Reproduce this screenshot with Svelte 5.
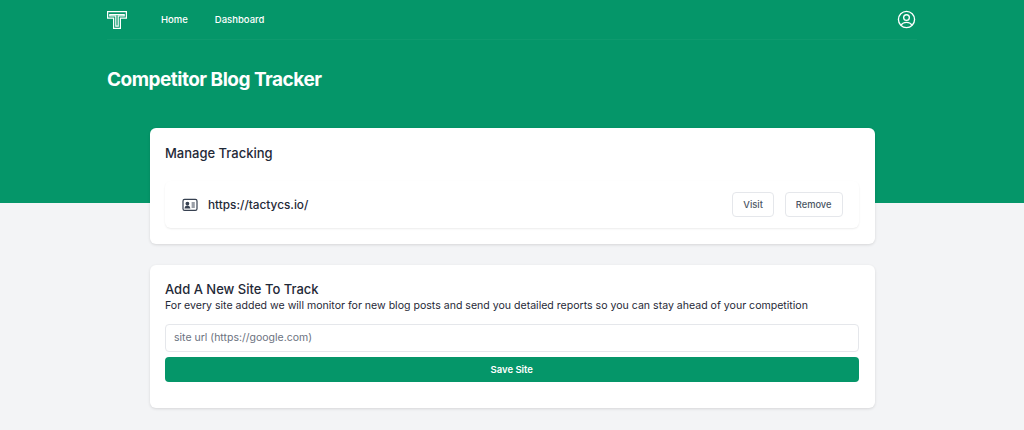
<script>
  let siteUrl = $state('');
  const links = ['Home', 'Dashboard'];
  const sites = ['https://tactycs.io/'];
</script>

<div class="page">
  <header class="hero">
    <nav class="nav">
      <div class="nav-left">
        <svg class="logo" width="20" height="18" viewBox="0 0 20 18" fill="none" stroke="#fff" stroke-width="1.2">
          <path d="M0.6 0.6H19.4V7.2H13.4V17.4H6.6V7.2H0.6Z" />
          <path d="M2.8 3.6H17.2V5H11.2V15.2H8.8V5H2.8Z" />
        </svg>
        {#each links as link}
          <a class="nav-link" href="#top">{link}</a>
        {/each}
      </div>
      <svg width="19" height="19" viewBox="0 0 24 24" fill="none" stroke="#fff" stroke-width="1.7">
        <circle cx="12" cy="12" r="10.2" />
        <circle cx="12" cy="9.6" r="3.6" />
        <path d="M5.2 18.9C6.8 16.6 9.2 15.6 12 15.6s5.2 1 6.8 3.3" />
      </svg>
    </nav>
    <h1>Competitor Blog Tracker</h1>
  </header>

  <main class="content">
    <section class="card manage">
      <h2>Manage Tracking</h2>
      {#each sites as site}
        <div class="site-row">
          <div class="site-name">
            <svg width="16" height="16" viewBox="0 0 16 16" fill="none" stroke="#374151" stroke-width="1.2">
              <rect x="1" y="2.4" width="14" height="11" rx="1.6" />
              <circle cx="5.4" cy="6.6" r="1.3" fill="#374151" />
              <path d="M3.2 11c.3-1.4 1.1-2 2.2-2s1.9.6 2.2 2z" fill="#374151" />
              <path d="M9.6 6h3.2M9.6 8h3.2M9.6 10h3.2" />
            </svg>
            <span>{site}</span>
          </div>
          <div class="actions">
            <button class="ghost">Visit</button>
            <button class="ghost">Remove</button>
          </div>
        </div>
      {/each}
    </section>

    <section class="card add">
      <h2>Add A New Site To Track</h2>
      <p>For every site added we will monitor for new blog posts and send you detailed reports so you can stay ahead of your competition</p>
      <input type="text" placeholder="site url (https://google.com)" bind:value={siteUrl} />
      <button class="save">Save Site</button>
    </section>
  </main>
</div>

<style>
  :global(body) {
    margin: 0;
    background: #f3f4f6;
    font-family: Inter, "Liberation Sans", sans-serif;
  }

  .page {
    height: 430px;
    overflow: hidden;
  }

  .hero {
    background: #059669;
    height: 203px;
    padding: 0 107px;
    box-sizing: border-box;
  }

  .nav {
    height: 39px;
    display: flex;
    justify-content: space-between;
    align-items: center;
    padding-right: 1px;
    border-bottom: 1px solid rgba(255, 255, 255, 0.04);
  }

  .nav-left {
    display: flex;
    align-items: center;
  }

  .logo {
    margin-right: 34px;
  }

  .nav-link {
    color: #fff;
    font-size: 9.5px;
    font-weight: 500;
    text-decoration: none;
    margin-right: 27px;
  }

  h1 {
    margin: 28px 0 0;
    color: #fff;
    font-size: 19px;
    line-height: 24px;
    font-weight: 700;
    letter-spacing: -0.5px;
  }

  .content {
    width: 725px;
    margin: -75px 0 0 149.5px;
    display: flex;
    flex-direction: column;
    gap: 21.5px;
  }

  .card {
    background: #fff;
    border-radius: 6px;
    padding: 17px 16px 16px 15.5px;
    box-shadow: 0 1px 3px rgba(0, 0, 0, 0.12);
    box-sizing: border-box;
  }

  .manage {
    height: 115.5px;
  }

  .add {
    height: 143px;
    padding-top: 16px;
  }

  h2 {
    margin: 0;
    color: #1f2937;
    font-size: 13px;
    line-height: 17px;
    font-weight: 500;
  }

  .site-row {
    margin-top: 19px;
    height: 47px;
    padding: 0 16px 0 17px;
    display: flex;
    justify-content: space-between;
    align-items: center;
    border-radius: 6px;
    box-shadow: 0 1px 2px rgba(0, 0, 0, 0.08);
  }

  .site-name {
    display: flex;
    align-items: center;
    gap: 10px;
    color: #1f2937;
    font-size: 11.8px;
    font-weight: 500;
  }

  .site-name span {
    margin-top: 1px;
  }

  .actions {
    display: flex;
    gap: 11px;
  }

  .ghost {
    height: 25px;
    padding: 0 10px;
    background: #fff;
    border: 1px solid #e5e7eb;
    border-radius: 4px;
    color: #4b5563;
    font: 500 9.3px Inter, sans-serif;
  }

  p {
    margin: 0;
    color: #1f2937;
    font-size: 10.57px;
    line-height: 16px;
  }

  input {
    display: block;
    width: 100%;
    height: 27.5px;
    margin-top: 10px;
    padding: 0 8px;
    box-sizing: border-box;
    border: 1px solid #e5e7eb;
    border-radius: 4px;
    font: 10.5px Inter, sans-serif;
  }

  input::placeholder {
    color: #6b7280;
  }

  .save {
    display: block;
    width: 100%;
    height: 25.5px;
    margin-top: 5px;
    background: #059669;
    border: none;
    border-radius: 4px;
    color: #fff;
    font: 600 9.5px Inter, sans-serif;
  }
</style>
